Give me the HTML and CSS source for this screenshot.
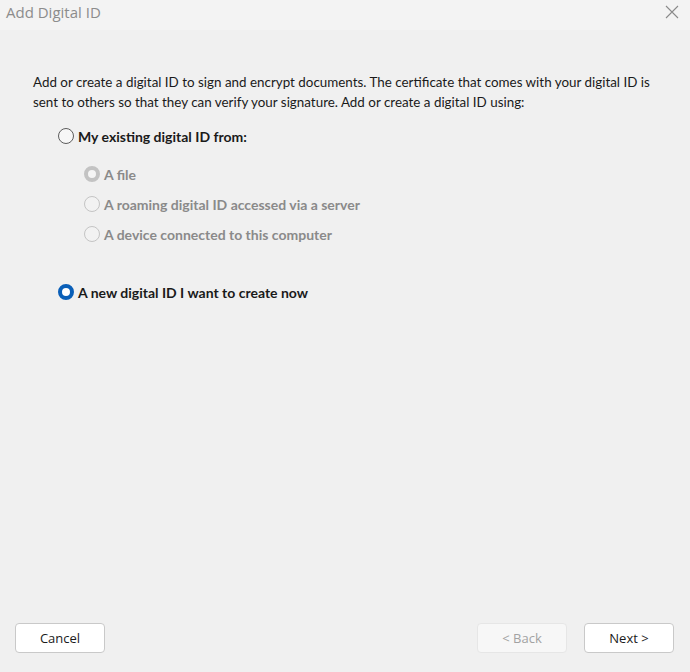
FILE: index.html
```html
<!DOCTYPE html>
<html>
<head>
<meta charset="utf-8">
<link rel="stylesheet" href="styles.css">
</head>
<body>
<div class="dialog">
  <div class="titlebar">
    <span class="title">Add Digital ID</span>
    <svg class="close" width="14" height="14" viewBox="0 0 14 14"><path d="M1 1L13 13M13 1L1 13" stroke="#8a8a8a" stroke-width="1.1" fill="none"/></svg>
  </div>
  <div class="content">
    <p class="intro">Add or create a digital ID to sign and encrypt documents. The certificate that comes with your digital ID is sent to others so that they can verify your signature. Add or create a digital ID using:</p>
    <div class="option main">
      <span class="radio"></span><span class="label">My existing digital ID from:</span>
    </div>
    <div class="suboptions">
      <div class="option sub"><span class="radio dis-checked"></span><span class="label">A file</span></div>
      <div class="option sub"><span class="radio dis"></span><span class="label">A roaming digital ID accessed via a server</span></div>
      <div class="option sub"><span class="radio dis"></span><span class="label">A device connected to this computer</span></div>
    </div>
    <div class="option main new">
      <span class="radio checked"></span><span class="label">A new digital ID I want to create now</span>
    </div>
  </div>
  <div class="footer">
    <button class="btn">Cancel</button>
    <div class="right">
      <button class="btn disabled">&lt; Back</button>
      <button class="btn">Next &gt;</button>
    </div>
  </div>
</div>
</body>
</html>
```
FILE: styles.css
```css
* { box-sizing: border-box; }
html, body { margin: 0; padding: 0; }
body {
  width: 690px;
  height: 672px;
  background: #f0f0f0;
  font-family: "Lato", "Noto Sans", sans-serif;
  color: #1a1a1a;
}
.dialog {
  width: 690px;
  height: 672px;
  display: flex;
  flex-direction: column;
}
.titlebar {
  height: 30px;
  background: #f3f3f3;
  display: flex;
  align-items: center;
  justify-content: space-between;
  padding: 0 11px 0 6px;
  flex-shrink: 0;
}
.title {
  font-family: "Open Sans", sans-serif;
  font-size: 15px;
  color: #8c8c8c;
  margin-top: -7px;
}
.close { margin-top: -6px; }
.content {
  flex: 1;
  padding: 42px 20px 0 33px;
}
.intro {
  margin: 0;
  font-size: 13.4px;
  line-height: 20px;
}
.option {
  display: flex;
  align-items: center;
}
.option.main {
  margin-left: 25px;
  margin-top: 14px;
  height: 20px;
}
.option .label {
  font-weight: bold;
  font-size: 14px;
}
.option.main .label { margin-left: 4px; }
.suboptions {
  margin-left: 51px;
  margin-top: 18px;
  display: flex;
  flex-direction: column;
  gap: 10px;
}
.option.sub { height: 20px; }
.option.sub .label {
  color: #8a8a8a;
  margin-left: 4px;
}
.option.new { margin-top: 38px; }
.radio {
  width: 16px;
  height: 16px;
  border-radius: 50%;
  border: 1px solid #5c5c5c;
  background: #f7f7f7;
  flex-shrink: 0;
  position: relative;
}
.radio.dis {
  border-color: #c4c4c4;
  background: #f2f2f2;
}
.radio.dis-checked {
  border: 4px solid #c3c3c3;
  background: #f5f5f5;
}
.radio.checked {
  border: 4.5px solid #0a5fb8;
  background: #ffffff;
}
.footer {
  height: 60px;
  flex-shrink: 0;
  display: flex;
  justify-content: space-between;
  align-items: flex-start;
  padding: 11px 16px 0 15px;
}
.right {
  display: flex;
  gap: 17px;
}
.btn {
  width: 90px;
  height: 30px;
  background: #ffffff;
  border: 1px solid #c9c9c9;
  border-radius: 4px;
  font-family: "Open Sans", sans-serif;
  font-size: 13px;
  color: #1a1a1a;
  padding: 0;
}
.btn.disabled {
  background: #f7f7f7;
  border-color: #e6e6e6;
  color: #a2a2a2;
}
```
